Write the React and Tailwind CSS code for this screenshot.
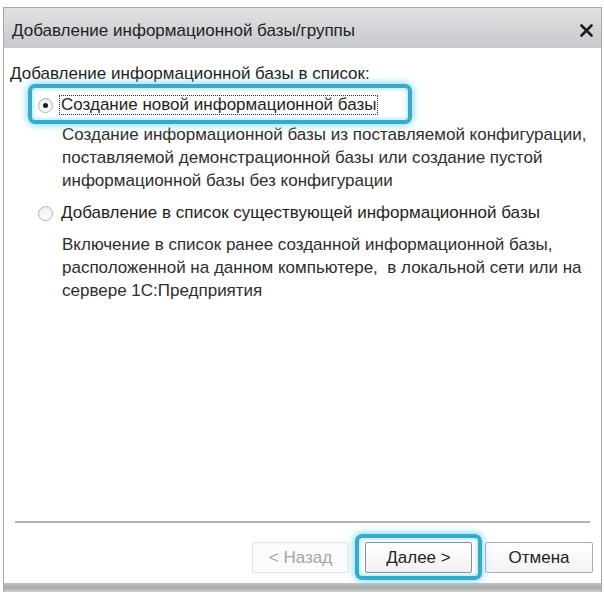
import { useState } from "react";

// highlight frame drawn around the focused control
function Glow({ className }) {
  return (
    <div
      className={`pointer-events-none absolute rounded-[7px] border-[4px] border-[#3aa9c8] shadow-[0_0_6px_2px_rgba(110,215,240,0.75),inset_0_0_4px_1px_rgba(120,220,240,0.7)] ${className}`}
    />
  );
}

function Radio({ checked }) {
  return (
    <span className="relative flex h-[15px] w-[15px] shrink-0 items-center justify-center rounded-full border border-[#b0b0b0] bg-gradient-to-b from-[#ededed] to-white">
      {checked && <span className="h-[5px] w-[5px] rounded-full bg-[#1a1a1a]" />}
    </span>
  );
}

export default function App() {
  const [mode, setMode] = useState("new");

  return (
    <div
      className="h-[596px] w-[604px] bg-white pl-[3px] pr-[2px] pt-[7px] text-[17px] text-[#1e1e1e]"
      style={{ fontFamily: '"Liberation Sans", Arial, sans-serif' }}
    >
      <div className="flex h-[585px] flex-col border-x border-t border-[#a9a9a9]">
        {/* TITLE BAR */}
        <div className="flex h-[40px] items-center justify-between bg-gradient-to-b from-[#e2e2e2] to-[#c6c8cd] pl-[8px] pr-[8px] pt-[4px]">
          <span className="leading-none text-[#222]">
            Добавление информационной базы/группы
          </span>
          <svg width="13" height="13" viewBox="0 0 13 13">
            <path d="M1.5 1.5 L11.5 11.5 M11.5 1.5 L1.5 11.5" stroke="#1c1c1c" strokeWidth="2.6" strokeLinecap="round" />
          </svg>
        </div>

        {/* CONTENT */}
        <div className="flex-1 px-[6px] pt-[15px]">
          <p className="leading-[22px]">Добавление информационной базы в список:</p>

          <div className="relative mt-[9px] flex h-[22px] items-center pl-[28px]" onClick={() => setMode("new")}>
            <Glow className="left-[18px] top-[-10px] h-[40px] w-[384px]" />
            <Radio checked={mode === "new"} />
            <span className="ml-[6px] border border-dotted border-[#333] px-[1px] leading-[18px]">
              Создание новой информационной базы
            </span>
          </div>
          <p className="mt-[7px] pl-[52px] leading-[23px] text-[#2e2e2e]">
            Создание информационной базы из поставляемой конфигурации,
            <br />
            поставляемой демонстрационной базы или создание пустой
            <br />
            информационной базы без конфигурации
          </p>

          <div className="mt-[10px] flex h-[22px] items-center pl-[28px]" onClick={() => setMode("add")}>
            <Radio checked={mode === "add"} />
            <span className="ml-[8px] leading-[22px]">Добавление в список существующей информационной базы</span>
          </div>
          <p className="mt-[9px] pl-[52px] leading-[23px] text-[#2e2e2e]">
            Включение в список ранее созданной информационной базы,
            <br />
            расположенной на данном компьютере,&nbsp; в локальной сети или на
            <br />
            сервере 1С:Предприятия
          </p>
        </div>

        {/* FOOTER */}
        <div className="mx-[11px] h-[2px] bg-[#b4b4b4]" />
        <div className="flex justify-end pb-[10px] pr-[8px] pt-[19px]">
          <button className="h-[31px] w-[97px] rounded-[2px] border border-[#e2e2e2] bg-[#fbfbfb] text-[#a5a5a5]">
            &lt; Назад
          </button>
          <div className="relative ml-[16px]">
            <Glow className="-left-[10px] -top-[8px] h-[46px] w-[127px]" />
            <button className="h-[31px] w-[107px] rounded-[2px] border border-[#8f8f8f] bg-gradient-to-b from-white to-[#f1f1f1] text-[#222]">
              Далее &gt;
            </button>
          </div>
          <button className="ml-[13px] h-[31px] w-[108px] rounded-[2px] border border-[#adadad] bg-gradient-to-b from-white to-[#f3f3f3] text-[#222]">
            Отмена
          </button>
        </div>
        <div className="h-[9px] bg-gradient-to-b from-[#c4c4c4] via-[#a9a9a9] to-[#cfcfcf]" />
      </div>
    </div>
  );
}
